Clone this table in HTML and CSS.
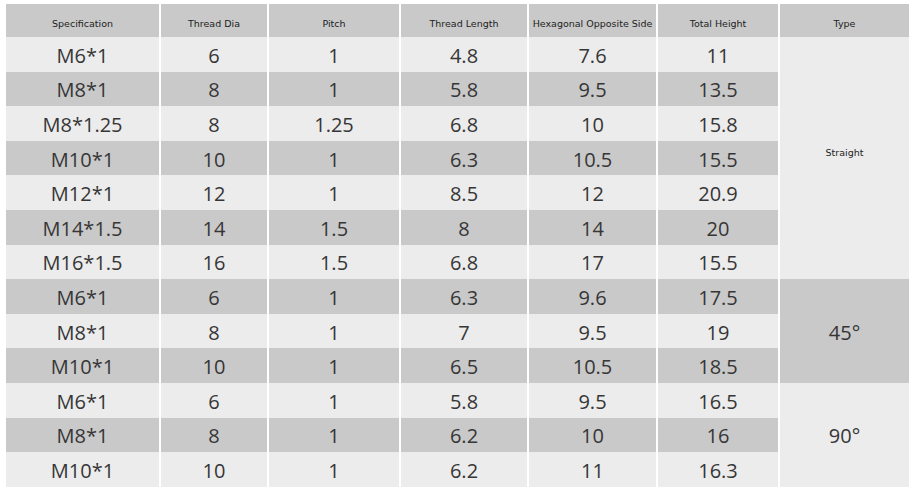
FILE: index.html
```html
<!DOCTYPE html>
<html>
<head>
<meta charset="utf-8">
<link rel="stylesheet" href="styles.css">
</head>
<body>
<div class="spec-table">
  <div class="row head">
    <div class="cell">Specification</div>
    <div class="cell">Thread Dia</div>
    <div class="cell">Pitch</div>
    <div class="cell">Thread Length</div>
    <div class="cell">Hexagonal Opposite Side</div>
    <div class="cell">Total Height</div>
    <div class="cell">Type</div>
  </div>

  <div class="type type-straight">Straight</div>
  <div class="type type-45">45°</div>
  <div class="type type-90">90°</div>

  <div class="row light"><div class="cell">M6*1</div><div class="cell">6</div><div class="cell">1</div><div class="cell">4.8</div><div class="cell">7.6</div><div class="cell">11</div></div>
  <div class="row dark"><div class="cell">M8*1</div><div class="cell">8</div><div class="cell">1</div><div class="cell">5.8</div><div class="cell">9.5</div><div class="cell">13.5</div></div>
  <div class="row light"><div class="cell">M8*1.25</div><div class="cell">8</div><div class="cell">1.25</div><div class="cell">6.8</div><div class="cell">10</div><div class="cell">15.8</div></div>
  <div class="row dark"><div class="cell">M10*1</div><div class="cell">10</div><div class="cell">1</div><div class="cell">6.3</div><div class="cell">10.5</div><div class="cell">15.5</div></div>
  <div class="row light"><div class="cell">M12*1</div><div class="cell">12</div><div class="cell">1</div><div class="cell">8.5</div><div class="cell">12</div><div class="cell">20.9</div></div>
  <div class="row dark"><div class="cell">M14*1.5</div><div class="cell">14</div><div class="cell">1.5</div><div class="cell">8</div><div class="cell">14</div><div class="cell">20</div></div>
  <div class="row light"><div class="cell">M16*1.5</div><div class="cell">16</div><div class="cell">1.5</div><div class="cell">6.8</div><div class="cell">17</div><div class="cell">15.5</div></div>
  <div class="row dark"><div class="cell">M6*1</div><div class="cell">6</div><div class="cell">1</div><div class="cell">6.3</div><div class="cell">9.6</div><div class="cell">17.5</div></div>
  <div class="row light"><div class="cell">M8*1</div><div class="cell">8</div><div class="cell">1</div><div class="cell">7</div><div class="cell">9.5</div><div class="cell">19</div></div>
  <div class="row dark"><div class="cell">M10*1</div><div class="cell">10</div><div class="cell">1</div><div class="cell">6.5</div><div class="cell">10.5</div><div class="cell">18.5</div></div>
  <div class="row light"><div class="cell">M6*1</div><div class="cell">6</div><div class="cell">1</div><div class="cell">5.8</div><div class="cell">9.5</div><div class="cell">16.5</div></div>
  <div class="row dark"><div class="cell">M8*1</div><div class="cell">8</div><div class="cell">1</div><div class="cell">6.2</div><div class="cell">10</div><div class="cell">16</div></div>
  <div class="row light"><div class="cell">M10*1</div><div class="cell">10</div><div class="cell">1</div><div class="cell">6.2</div><div class="cell">11</div><div class="cell">16.3</div></div>
</div>
</body>
</html>
```
FILE: styles.css
```css
html, body {
  margin: 0;
  padding: 0;
  background: #ffffff;
}

.spec-table {
  display: grid;
  grid-template-columns: 153px 106px 130px 126px 127px 120px 129px;
  grid-template-rows: 33px repeat(13, 34.6px);
  column-gap: 2px;
  padding: 4px 0 0 6px;
  font-family: "Open Sans", "Noto Sans", sans-serif;
  color: #363636;
}

.row {
  display: contents;
}

.cell,
.type {
  display: flex;
  align-items: center;
  justify-content: center;
  white-space: nowrap;
  font-size: 20px;
  padding-top: 2px;
  box-sizing: border-box;
}

.head .cell {
  background: #c9c9c9;
  font-family: "DejaVu Sans", sans-serif;
  font-size: 9.5px;
  color: #222222;
  padding-top: 6px;
}

.light .cell {
  background: #ececec;
}

.dark .cell {
  background: #c9c9c9;
}

.type {
  grid-column: 7;
}

.type-straight {
  grid-row: 2 / 9;
  background: #ececec;
  font-family: "DejaVu Sans", sans-serif;
  font-size: 9.5px;
  color: #222222;
  padding-top: 0;
  padding-bottom: 12px;
}

.type-45 {
  grid-row: 9 / 12;
  background: #c9c9c9;
}

.type-90 {
  grid-row: 12 / 15;
  background: #ececec;
}
```
